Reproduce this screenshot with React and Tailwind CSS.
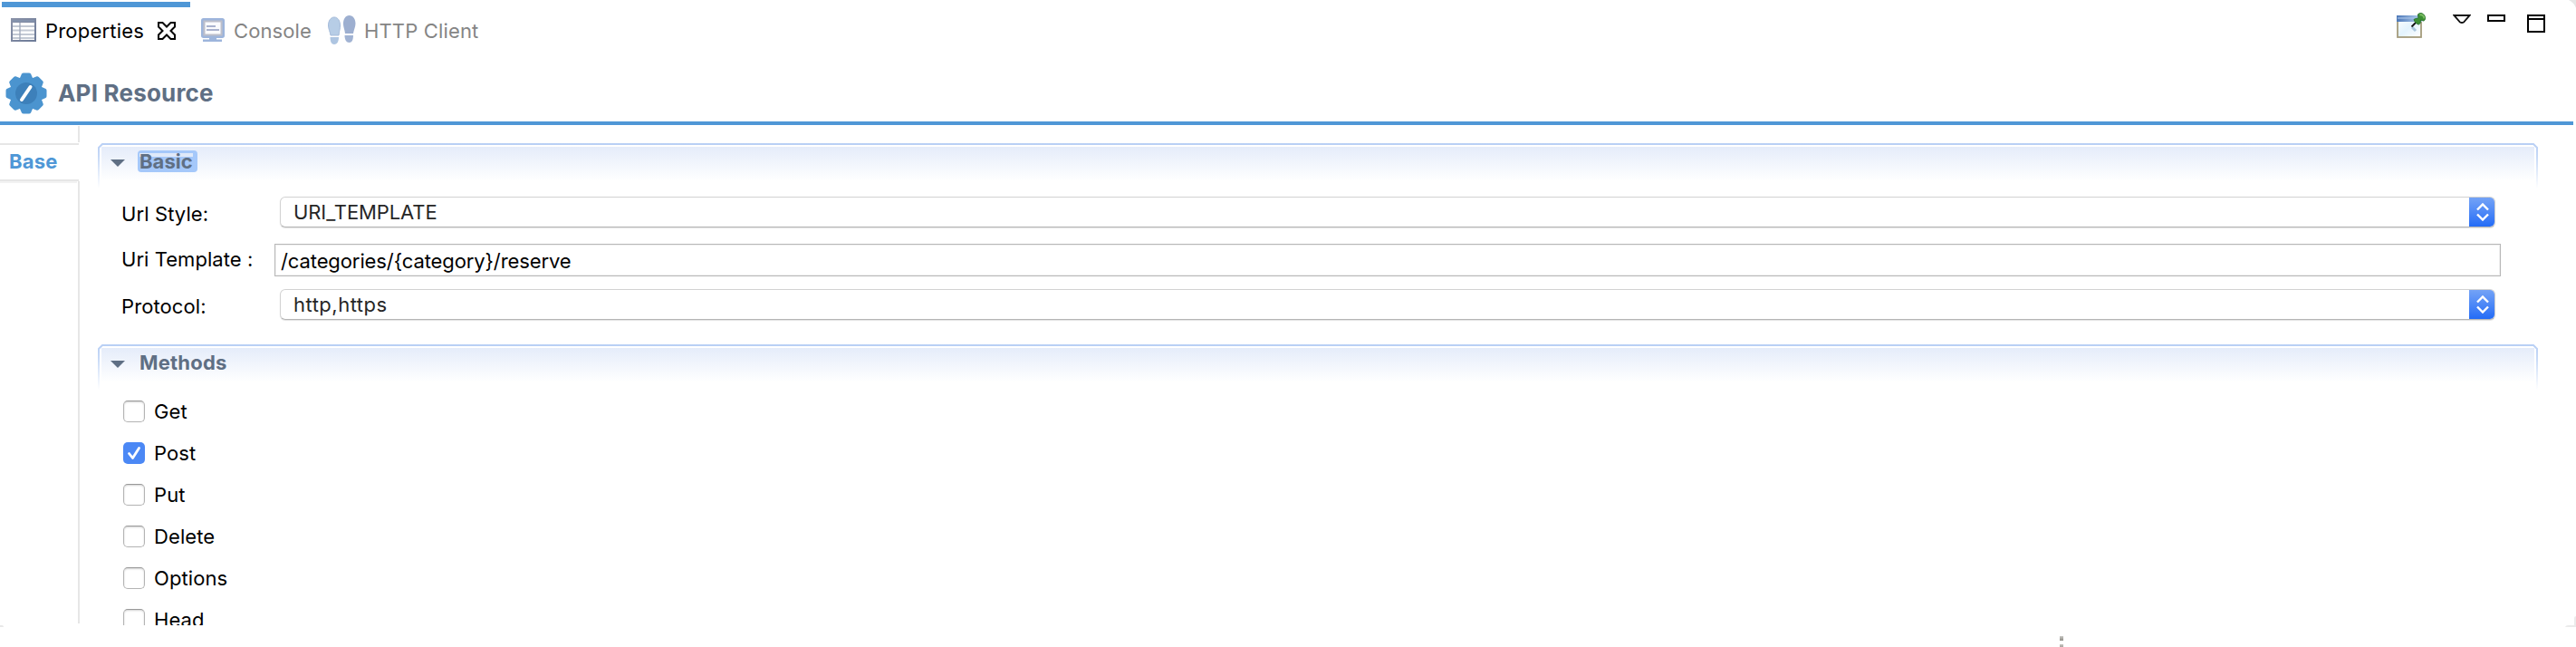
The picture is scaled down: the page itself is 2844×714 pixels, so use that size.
function TableIcon() {
  return (
    <svg className="h-[26px] w-7 shrink-0" viewBox="0 0 28 26">
      <defs>
        <linearGradient id="tbl" x1="0" y1="0" x2="1" y2="1">
          <stop offset="0" stopColor="#8a92a8" />
          <stop offset="1" stopColor="#6d7b98" />
        </linearGradient>
      </defs>
      <rect width="28" height="26" fill="url(#tbl)" />
      <rect x="2" y="2" width="24" height="2" fill="#8493ad" />
      <rect x="2" y="5" width="24" height="19" fill="#fff" />
      <path d="M2 9h24M2 13.5h24M2 18h24M2 22h24" stroke="#c3c9d4" strokeWidth="1.8" />
      <path d="M10 5v19" stroke="#a3abbd" strokeWidth="1.4" />
    </svg>
  );
}

function CloseIcon() {
  return (
    <svg className="h-5 w-5 shrink-0" viewBox="0 0 20 20">
      <path d="M1 1h4.500L10 5.500 14.500 1H19v4.500L14.500 10 19 14.500V19h-4.500L10 14.500 5.500 19H1v-4.500L5.500 10 1 5.500z" fill="#fff" stroke="#000" strokeWidth="2" />
    </svg>
  );
}

function ConsoleIcon() {
  return (
    <svg className="h-[26px] w-[26px] shrink-0" viewBox="0 0 26 26">
      <rect x="1.200" y="1.200" width="23.600" height="19.600" rx="1.500" fill="#bdbfca" stroke="#9db5dc" strokeWidth="2.400" />
      <rect x="4.500" y="4.500" width="17" height="13" fill="#fafbfd" />
      <path d="M6 9h10M6 13h14" stroke="#a9b2ce" strokeWidth="1.800" />
      <path d="M9 22h8v1.500h6V26H2v-2.500h7z" fill="#9db5dc" />
    </svg>
  );
}

function FootprintsIcon() {
  return (
    <svg className="h-8 w-[31px] shrink-0" viewBox="0 0 31 32">
      <path d="M7 2c4 0 6.500 4 6.500 9 0 4-1 6-1.500 11H3C2.500 18 .5 15 .5 11 .5 6 3 2 7 2z" fill="#b7cde6" stroke="#a5bbda" />
      <path d="M2.500 24H12c0 5-2 8-5 8s-4.500-3-4.500-8z" fill="#aec5e1" />
      <path d="M23.500 0c4.500 0 7 4 7 9 0 4-2 7-2.500 11h-9c-.5-5-2-7-2-11 0-5 2.500-9 6.500-9z" fill="#9dafd0" />
      <path d="M18.500 22H28c0 5-1.500 8-4.500 8s-5-3-5-8z" fill="#a1b3d3" />
    </svg>
  );
}

function GearIcon() {
  const teeth = [0, 45, 90, 135, 180, 225, 270, 315];
  return (
    <svg className="h-[46px] w-[46px] shrink-0" viewBox="-23 -23 46 46">
      {teeth.map((a) => (
        <path key={a} transform={`rotate(${a})`} d="M-7.500-16L-5-21.500Q-4.500-22.500-3-22.500H3Q4.500-22.500 5-21.500L7.500-16z" fill="#4b94cf" />
      ))}
      <circle r="18" fill="#4b94cf" />
      <circle r="12" fill="#3d80ba" />
      <path d="M-5 7L4.500-7" stroke="#fff" strokeWidth="4" strokeLinecap="round" />
    </svg>
  );
}

function PinIcon() {
  return (
    <svg className="h-7 w-8" viewBox="0 0 32 28">
      <defs>
        <linearGradient id="win" x1="0" y1="0" x2="1" y2="1">
          <stop offset="0" stopColor="#ffffff" />
          <stop offset=".5" stopColor="#e3f3fd" />
          <stop offset="1" stopColor="#ffffff" />
        </linearGradient>
        <linearGradient id="bar" x1="0" y1="0" x2="1" y2="0">
          <stop offset="0" stopColor="#4d78b8" />
          <stop offset="1" stopColor="#b5d0ee" />
        </linearGradient>
      </defs>
      <rect x="1" y="5" width="26" height="22" fill="url(#win)" stroke="#a59c7c" strokeWidth="1.800" />
      <rect x="0" y="3" width="28" height="7" fill="url(#bar)" />
      <path d="M1 6h20" stroke="#a7c4e8" strokeWidth="1.200" />
      <path d="M17 16l4 4" stroke="#a9c6dc" strokeWidth="3" />
      <path d="M16.500 15.500l5-5" stroke="#111" strokeWidth="1.800" />
      <path d="M19 7.500c2-1.500 4-1 5-1.500l-.500-4c2-3 8-1 8 4 0 2-1 3-2 3l-3-1c0 2 0 4-2 5-2 0-5-3-5.500-5.500z" fill="#3b8f33" stroke="#2c7430" />
      <path d="M25.500 2.500c2-1 5 1 5 4" stroke="#7cbd63" strokeWidth="2" fill="none" />
    </svg>
  );
}

function SectionHeader({ title, selected }) {
  return (
    <div className="relative h-[50px] w-[2694px] shrink-0">
      <svg className="absolute inset-0 h-[50px] w-[2694px]" viewBox="0 0 2694 50">
        <defs>
          <linearGradient id="fill" x1="0" y1="0" x2="0" y2="1">
            <stop offset="0" stopColor="#e5ecfa" />
            <stop offset="1" stopColor="#ffffff" />
          </linearGradient>
          <linearGradient id="edge" gradientUnits="userSpaceOnUse" x1="0" y1="0" x2="0" y2="50">
            <stop offset="0" stopColor="#b8cff5" />
            <stop offset=".3" stopColor="#c6d9f7" />
            <stop offset="1" stopColor="#ffffff" />
          </linearGradient>
        </defs>
        <rect x="4" y="4" width="2686" height="38" fill="url(#fill)" />
        <path d="M1 50V5L5 1H2689L2693 5V50" fill="none" stroke="url(#edge)" strokeWidth="2" />
      </svg>
      <div className="relative flex h-10 items-center pl-[14px]">
        <svg className="mt-1 h-2 w-4" viewBox="0 0 16 8">
          <path d="M0 0h16L8 8z" fill="#5f6f84" />
        </svg>
        <span className={selected ? "ml-[14px] flex h-6 w-[66px] items-center rounded-[4px] bg-[#a5c8fa] pl-[2px]" : "ml-[14px] flex h-6 items-center pl-[2px]"}>
          <span
            className={
              selected
                ? "h-[18px] bg-linear-to-b from-[#dfe9f9] from-20% to-[#a5c8fa] to-20% leading-[18px] font-bold tracking-[0.05px] text-[#5f6f84]"
                : "font-bold tracking-[0.2px] text-[#5f6f84]"
            }
          >
            {title}
          </span>
        </span>
      </div>
    </div>
  );
}

function Select({ children }) {
  return (
    <div className="ml-[6px] flex h-[34px] w-[2446px] items-stretch overflow-hidden rounded-[6px] border border-[#d2d2d2] border-b-[#b5b5b5] bg-white shadow-[0_1px_1px_rgba(0,0,0,0.12)]">
      <span className="flex-1 pl-[14px] leading-[32px] text-[#262626]">{children}</span>
      <span className="-my-px -mr-px flex w-[29px] items-center justify-center bg-linear-to-b from-[#76a4f6] to-[#1f69f6]">
        <svg className="h-5 w-[14px]" viewBox="0 0 14 20" fill="none" stroke="#fff" strokeWidth="2.400">
          <path d="M1 7.500L7 1.500L13 7.500M1 12.500L7 18.500L13 12.500" />
        </svg>
      </span>
    </div>
  );
}

const methods = ["Get", "Post", "Put", "Delete", "Options", "Head"];

export default function App() {
  return (
    <div className="flex h-[714px] w-[2844px] flex-col overflow-hidden bg-white font-['Inter',sans-serif] text-[22px] leading-[26px] text-black">
      <header className="relative h-[138px] w-full shrink-0">
        <div className="flex h-[68px] justify-between">
          <div className="flex">
            <div className="mt-[2px] ml-[2px] flex w-52 items-center border-t-[6px] border-[#4f97d6] pb-[10px] pl-[10px]">
              <TableIcon />
              <span className="ml-[10px] w-[116px] pt-[2px] tracking-[0.2px]">Properties</span>
              <span className="ml-[8px] pt-[2px]"><CloseIcon /></span>
            </div>
            <div className="ml-3 flex items-center pb-[2px] text-[#858585]">
              <ConsoleIcon />
              <span className="ml-[10px] w-[104px] pt-[2px] tracking-[0.1px]">Console</span>
              <FootprintsIcon />
              <span className="ml-[9px] pt-[2px] tracking-[0.15px]">HTTP Client</span>
            </div>
          </div>
          <div className="flex items-start pt-[14px] pr-[34px]">
            <PinIcon />
            <svg className="mt-[2px] ml-[30px] h-[10px] w-5" viewBox="0 0 20 10">
              <path d="M1.500 1h17L12 8.500Q10 9.500 8 8.500z" fill="#fff" stroke="#111" strokeWidth="1.900" />
            </svg>
            <span className="mt-[2px] ml-[18px] h-2 w-5 border-2 border-black" />
            <span className="mt-[2px] ml-6 h-5 w-5 border-2 border-black"><span className="mt-[2px] block h-[2px] bg-black" /></span>
          </div>
        </div>
        <div className="flex h-[70px] w-[2841px] items-center border-b-4 border-[#4f97d6] pt-1 pl-[6px]">
          <GearIcon />
          <h1 className="ml-[12px] text-[26px] leading-[30px] font-bold tracking-[0.2px] text-[#5f6f84]">API Resource</h1>
        </div>
        <svg className="absolute top-0 right-0 h-[9px] w-2" viewBox="0 0 8 9">
          <path d="M0 0h8v9Q6 3 0 0z" fill="#e6e6e6" />
        </svg>
      </header>
      <main className="flex h-[552px] shrink-0 overflow-hidden">
        <aside className="flex w-[88px] shrink-0 flex-col">
          <div className="mt-px h-[18px] border-r-2 border-[#e6e6e6]" />
          <div className="mt-px flex h-[42px] w-[87px] items-center border-y-2 border-[#e6e6e6] pb-[2px] pl-[10px] font-bold tracking-[0.2px] text-[#4f97d6] shadow-[-2px_2px_0_#f2f2f2]">Base</div>
          <div className="mb-[2px] flex-1 border-r-2 border-[#e6e6e6]" />
        </aside>
        <section className="ml-5 flex flex-col pt-5">
          <SectionHeader title="Basic" selected />
          <div className="flex h-[172px] shrink-0 flex-col pl-[26px]">
            <div className="mt-[9px] flex h-[34px] items-center">
              <span className="w-[169px] pt-[4px] tracking-[0.1px]">Url Style:</span>
              <Select><span className="tracking-[-0.1px]">URI_TEMPLATE</span></Select>
            </div>
            <div className="mt-[18px] flex h-9 items-center">
              <span className="w-[169px] pb-[2px] tracking-[0.05px]">Uri Template :</span>
              <div className="h-9 w-[2458px] border border-[#b8b8b8] pl-[6px] leading-[36px] tracking-[-0.1px] shadow-[inset_0_0_0_1px_#f0f0f0]">/categories/{"{category}"}/reserve</div>
            </div>
            <div className="mt-[14px] flex h-[34px] items-center">
              <span className="w-[169px] pt-[4px] tracking-[0.1px]">Protocol:</span>
              <Select><span className="tracking-[0.5px]">http,https</span></Select>
            </div>
          </div>
          <SectionHeader title="Methods" />
          <div className="flex flex-col gap-[22px] pt-[12px] pl-7">
            {methods.map((name) => (
              <div key={name} className="flex h-6 shrink-0 items-center">
                {name === "Post" ? (
                  <span className="h-6 w-6 rounded-[5px] bg-[#4b88f5]">
                    <svg className="h-6 w-6" viewBox="0 0 24 24" fill="none" stroke="#fff" strokeWidth="2.800" strokeLinecap="round" strokeLinejoin="round">
                      <path d="M6.500 12.500l4 5 7-11" />
                    </svg>
                  </span>
                ) : (
                  <span className="h-6 w-6 rounded-[5px] border border-[#b4b4b4] border-t-[#999] shadow-[inset_0_1px_2px_rgba(0,0,0,0.18)]" />
                )}
                <span className="ml-[10px] tracking-[0.1px]">{name}</span>
              </div>
            ))}
          </div>
        </section>
      </main>
      <footer className="flex h-6 shrink-0 items-start justify-between">
        <span className="h-[2px] w-1 rounded-tr-full bg-[#e8e8e8]" />
        <div className="mt-3 ml-[2270px] flex w-1 flex-col gap-1">
          <span className="h-[5px] bg-linear-to-b from-[#c9c8c4] to-[#8f8d86]" />
          <span className="h-[5px] bg-linear-to-b from-[#c9c8c4] to-[#8f8d86]" />
        </div>
        <svg className="-mt-[10px] ml-auto h-3 w-3" viewBox="0 0 12 12">
          <path d="M12 0v12H0q1-2 3-2h7V2q0-2 2-2z" fill="#ebebeb" />
        </svg>
      </footer>
    </div>
  );
}
